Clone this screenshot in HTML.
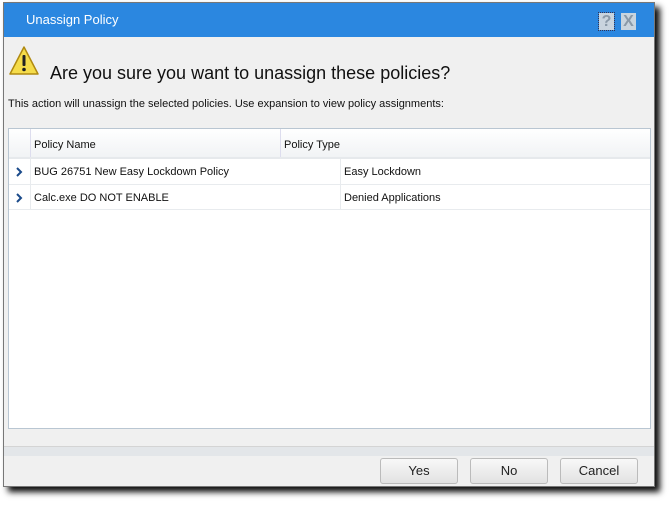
<!DOCTYPE html><html><head><style>
body{margin:0;width:670px;height:505px;background:#fff;position:relative;font-family:"Liberation Sans",sans-serif;overflow:hidden}
.dlg{position:absolute;left:3px;top:2px;width:652px;height:485px;background:#f0f0f0;box-shadow:5px 5px 6px rgba(0,0,0,.95);border:1px solid #777;box-sizing:border-box}
.tb{position:absolute;left:0;top:0;right:0;height:34px;background:#2b87e0;color:#fff;font-size:13px;line-height:34px;padding-left:22px}
.ic{position:absolute;top:10px;width:15px;height:17px;background:#c9d4de;color:#8a99a8;font-weight:bold;font-size:16px;line-height:17px;text-align:center}
.t{position:absolute;white-space:nowrap;color:#111}
.tbl{position:absolute;left:4px;top:125px;width:643px;height:301px;background:#fff;border:1px solid #b9c6d2;box-sizing:border-box;font-size:11px}
.btn{position:absolute;top:455px;width:78px;height:26px;border:1px solid #bbb;border-radius:3px;background:linear-gradient(#f8f8f8,#e2e2e2);box-sizing:border-box;font-size:13px;text-align:center;line-height:24px;color:#222}
.chev{position:absolute;left:6px;width:8px;height:10px}
</style></head><body>
<div class="dlg">
<div class="tb">Unassign Policy</div>
<div class="ic" style="left:595px;outline:1px dotted #335">?</div>
<div class="ic" style="left:617px">X</div>
<svg style="position:absolute;left:4px;top:42px" width="32" height="33" viewBox="0 0 32 33"><path d="M16 2 L30 29 L2 29 Z" fill="#f5dc4a" stroke="#b08a10" stroke-width="1.5" stroke-linejoin="round"/><rect x="14.5" y="10" width="3" height="11" rx="1" fill="#222"/><circle cx="16" cy="24.5" r="1.8" fill="#222"/></svg>
<div class="t" style="left:46px;top:60px;font-size:18px">Are you sure you want to unassign these policies?</div>
<div class="t" style="left:4px;top:95px;font-size:11px">This action will unassign the selected policies. Use expansion to view policy assignments:</div>
<div class="tbl">
<div style="position:absolute;left:0;top:0;right:0;height:28px;background:linear-gradient(#fff,#f1f3f5);border-bottom:2px solid #e6e9ec"></div>
<div style="position:absolute;left:21px;top:0;height:28px;border-left:1px solid #dde"></div>
<div style="position:absolute;left:271px;top:0;height:28px;border-left:1px solid #dde"></div>
<div class="t" style="left:25px;top:10px">Policy Name</div>
<div class="t" style="left:275px;top:10px">Policy Type</div>
<div style="position:absolute;left:0;top:55px;right:0;border-top:1px solid #e8ebee"></div>
<div style="position:absolute;left:0;top:80px;right:0;border-top:1px solid #e8ebee"></div>
<div style="position:absolute;left:21px;top:30px;height:50px;border-left:1px solid #e8ebee"></div>
<div style="position:absolute;left:331px;top:30px;height:50px;border-left:1px solid #e8ebee"></div>
<svg class="chev" style="top:38px" viewBox="0 0 8 10"><path d="M2 1 L6 5 L2 9" fill="none" stroke="#1a4a8a" stroke-width="2"/></svg>
<svg class="chev" style="top:64px" viewBox="0 0 8 10"><path d="M2 1 L6 5 L2 9" fill="none" stroke="#1a4a8a" stroke-width="2"/></svg>
<div class="t" style="left:25px;top:37px">BUG 26751 New Easy Lockdown Policy</div>
<div class="t" style="left:335px;top:37px">Easy Lockdown</div>
<div class="t" style="left:25px;top:63px">Calc.exe DO NOT ENABLE</div>
<div class="t" style="left:335px;top:63px">Denied Applications</div>
</div>
<div style="position:absolute;left:0;right:0;top:443px;height:9px;background:#e3e6e9;border-top:1px solid #d4d4d4"></div>
<div class="btn" style="left:376px">Yes</div>
<div class="btn" style="left:466px">No</div>
<div class="btn" style="left:556px">Cancel</div>
</div>
</body></html>
